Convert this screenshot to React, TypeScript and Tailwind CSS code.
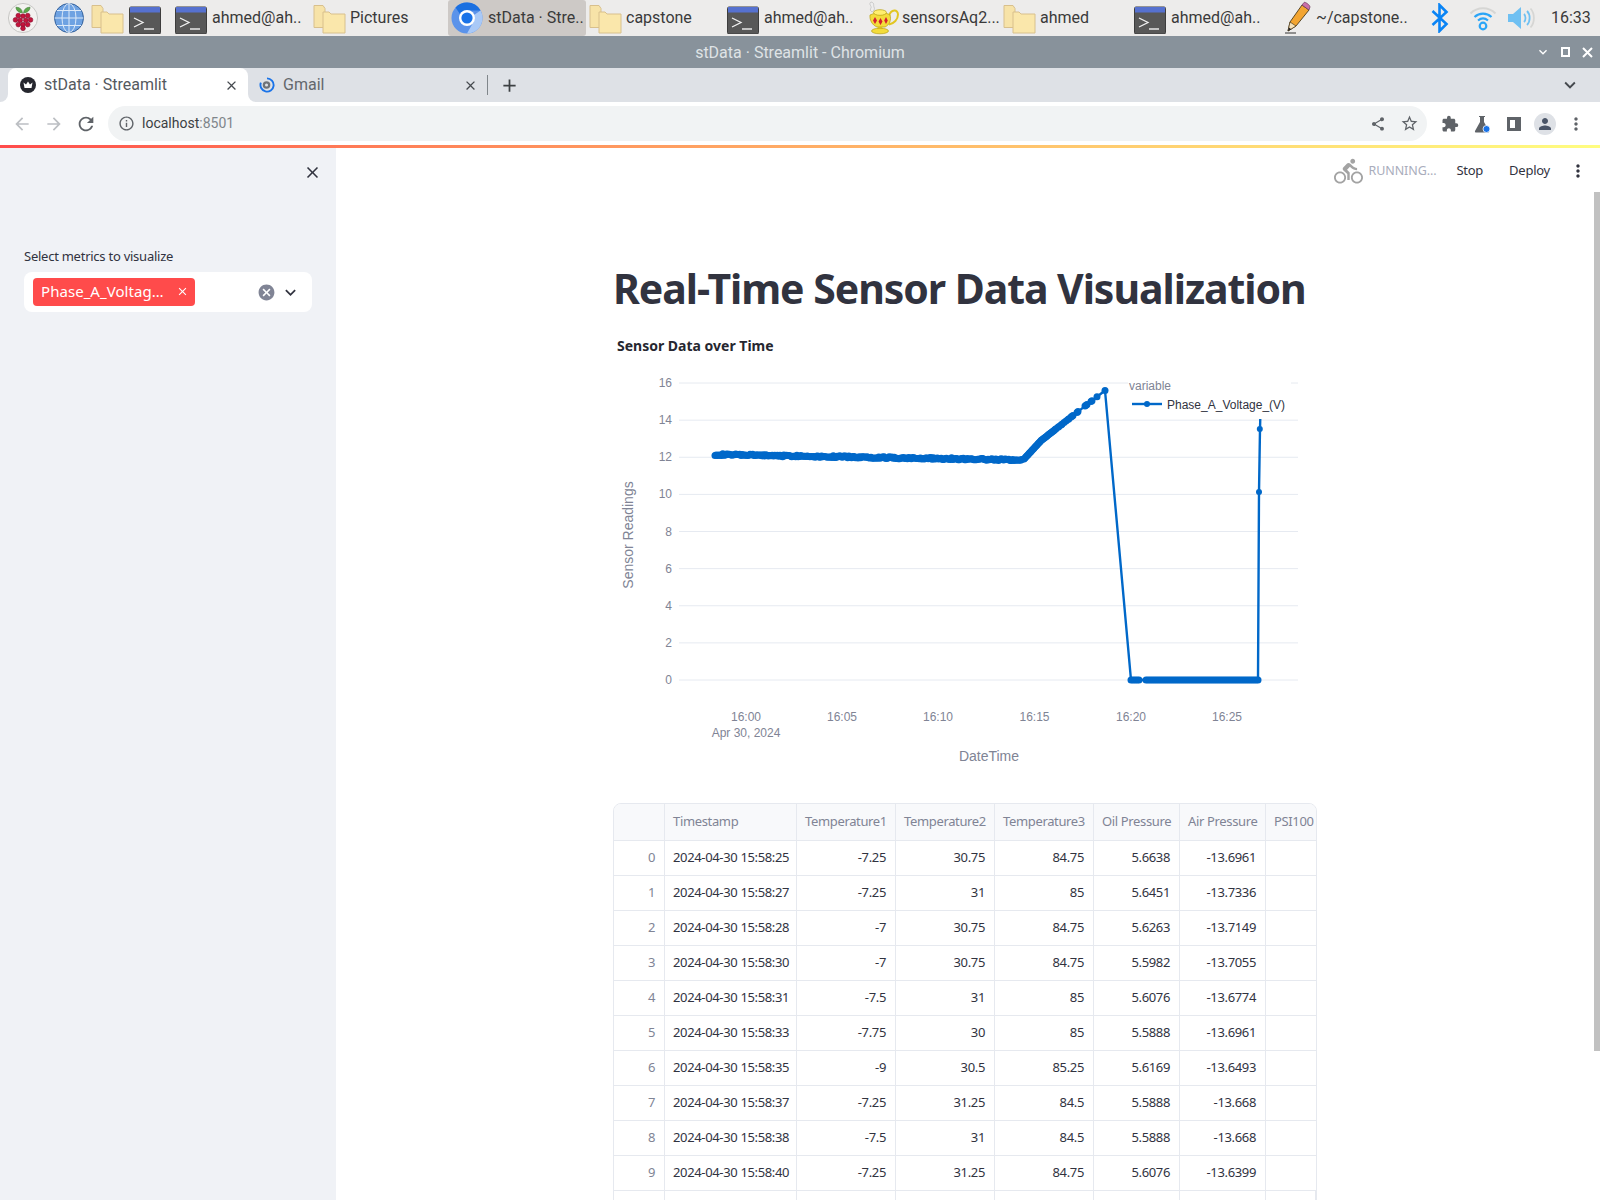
import React from "react";
import {
  MdArrowBack, MdArrowForward, MdRefresh, MdInfoOutline, MdShare, MdStarBorder, MdExtension,
  MdPerson, MdMoreVert, MdClose, MdExpandMore, MdDirectionsBike, MdCancel, MdAdd,
} from "react-icons/md";

const ROBOTO = "font-['Roboto',sans-serif]";
const ST = "font-['Noto_Sans',sans-serif]";

function Folder() {
  return (
    <svg width="33" height="32" viewBox="0 0 33 32" className="shrink-0">
      <path d="M1 3.500h9l2 3v19H1z" fill="#f7e3a8" stroke="#d8c08d" />
      <path d="M10 10h6l2 2h14v19H10z" fill="#fae7ab" stroke="#d8c08d" />
    </svg>
  );
}
function Terminal() {
  return (
    <svg width="32" height="32" viewBox="0 0 32 32" className="shrink-0">
      <rect x="0.5" y="5" width="31" height="27" rx="1.5" fill="#585858" stroke="#3d3d3d" />
      <rect x="1" y="5" width="30" height="5.5" fill="#5671cf" />
      <path d="M5 16l9 4.500-9 4.500" fill="none" stroke="#f2f2f2" strokeWidth="1.3" />
      <path d="M15 27h10" stroke="#f2f2f2" strokeWidth="1.4" />
    </svg>
  );
}
function Raspberry() {
  const berries = [[16, 16], [11, 15.5], [21, 15.5], [8, 20], [13, 20.5], [19, 20.5], [24, 20], [11, 25], [16, 25], [21, 25], [16, 29]];
  return (
    <svg width="32" height="32" viewBox="0 0 32 34" className="shrink-0">
      <circle cx="16" cy="17" r="15.5" fill="#f3f2f0" stroke="#c4c4c2" />
      <path d="M15.5 11.500C11 11.500 8.500 8.500 8.500 5.500c4 0 6.500 2 7 6zM16.500 11.500C21 11.500 23.500 8.500 23.500 5.500c-4 0-6.500 2-7 6z" fill="#5da84a" stroke="#2f6b2a" strokeWidth=".5" />
      {berries.map(([x, y], i) => <circle key={i} cx={x} cy={y - 1} r="2.500" fill="#c4153c" stroke="#7d0c2a" strokeWidth=".6" />)}
    </svg>
  );
}
function Globe() {
  return (
    <svg width="32" height="32" viewBox="0 0 32 32" className="shrink-0">
      <circle cx="16" cy="16" r="14.5" fill="#6ea2e2" stroke="#33609a" />
      <ellipse cx="16" cy="16" rx="7" ry="14.5" fill="none" stroke="#dce9f8" />
      <path d="M16 1.500v29M1.500 16h29M4 8.500h24M4 23.500h24" stroke="#dce9f8" fill="none" />
    </svg>
  );
}
function Chromium() {
  return (
    <svg width="32" height="32" viewBox="0 0 32 32" className="shrink-0">
      <circle cx="16" cy="16" r="15.5" fill="#5b93ea" />
      <path d="M16 .5A15.500 15.500 0 0 1 29.600 8.500H16A7.500 7.500 0 0 0 9 12L4.500 5.500A15.500 15.500 0 0 1 16 .5z" fill="#1a6fe0" />
      <path d="M29.600 8.500A15.500 15.500 0 0 1 16 31.500L22.500 20A7.500 7.500 0 0 0 23 13z" fill="#a9c9f7" />
      <circle cx="16" cy="16" r="8" fill="#fff" />
      <circle cx="16" cy="16" r="5.600" fill="#1a73e8" />
    </svg>
  );
}
function Lamp() {
  return (
    <svg width="33" height="34" viewBox="0 0 33 34" className="shrink-0">
      <path d="M5 1c-3 2 1 4 0 6-1 1-1 3 1 4 2-1 3-3 2-5C7 4 9 2 5 1z" fill="#eee" stroke="#bbb" strokeWidth=".7" />
      <path d="M23 15c2-7 9-7 9-1.500 0 5-4 9-9 10" fill="none" stroke="#e2c621" strokeWidth="2" />
      <path d="M4 14c6-3 16-3 20 0 1.500 5-.5 10-5 12h-8C6 24 3.500 19 4 14z" fill="#f3dc3b" stroke="#b89f10" strokeWidth=".7" />
      <ellipse cx="14" cy="11.500" rx="6.500" ry="2.800" fill="#ffef6e" stroke="#b89f10" strokeWidth=".7" />
      <path d="M12 26h4l1 2h-6z" fill="#e2c621" />
      <ellipse cx="14" cy="30" rx="8.500" ry="2.800" fill="#f3dc3b" stroke="#b89f10" strokeWidth=".7" />
      <path d="M9 16l2 3.500-2 3.500-2-3.500zM14.500 17l2 3.500-2 3.500-2-3.500zM20 16l1.800 3.500-1.800 3.500-1.800-3.500z" fill="#d3202f" />
    </svg>
  );
}
function Pencil() {
  return (
    <svg width="34" height="34" viewBox="0 0 34 34" className="shrink-0">
      <path d="M5 32h11" stroke="#333" strokeWidth="1" />
      <path d="M8 30l2-9L22 4l7 5L16 25z" fill="#f3a531" stroke="#4b3a1a" strokeWidth=".9" />
      <path d="M8 30l2-9 6 4z" fill="#f6e3bd" stroke="#4b3a1a" strokeWidth=".7" />
      <path d="M8 30l.8-3.500 2.600 1.800z" fill="#222" />
      <path d="M22 4l2-2.500c1-1 6 2.500 6 4.500L29 9z" fill="#c96fa8" stroke="#6d3a5c" strokeWidth=".7" />
    </svg>
  );
}
function Bluetooth() {
  return (
    <svg width="20" height="30" viewBox="0 0 20 30" className="shrink-0">
      <path d="M2.500 8l14 13-7 7V2l7 7-14 13" fill="none" stroke="#0a84f5" strokeWidth="2.600" />
    </svg>
  );
}
function Wifi() {
  return (
    <svg width="28" height="28" viewBox="0 0 28 28" className="shrink-0">
      <path d="M1.500 9.500c7-7 18-7 25 0" fill="none" stroke="#d6d6d4" strokeWidth="2" />
      <path d="M5.500 13c5-4.600 12-4.600 17 0" fill="none" stroke="#2ba5f7" strokeWidth="2.200" />
      <path d="M9 16.500c3-2.500 7-2.500 10 0" fill="none" stroke="#2ba5f7" strokeWidth="2.200" />
      <circle cx="14" cy="22" r="3.300" fill="none" stroke="#2ba5f7" strokeWidth="2.200" />
    </svg>
  );
}
function Volume() {
  return (
    <svg width="28" height="28" viewBox="0 0 28 28" className="shrink-0">
      <path d="M1 10h5l8-7v22l-8-7H1z" fill="#6fc0f2" />
      <path d="M17 10c2 2 2 6 0 8M20 7c3.500 3.500 3.500 10.500 0 14" fill="none" stroke="#6fc0f2" strokeWidth="1.800" />
      <path d="M23.500 4.500c4.500 5 4.500 14 0 19" fill="none" stroke="#d6d6d4" strokeWidth="1.800" />
    </svg>
  );
}
function TaskLabel({ children }: { children: React.ReactNode }) {
  return <span className="text-[16px] leading-none text-[#3a3a3a] whitespace-nowrap">{children}</span>;
}

function Taskbar() {
  return (
    <div className={`${ROBOTO} h-[36px] shrink-0 bg-[#edeceb] flex items-center pl-[7px]`}>
      <div className="w-[46px] flex items-center"><Raspberry /></div>
      <div className="w-[38px] flex items-center"><Globe /></div>
      <div className="w-[38px] flex items-center"><Folder /></div>
      <div className="w-[46px] flex items-center"><Terminal /></div>
      <div className="w-[138px] flex items-center gap-[5px]"><Terminal /><TaskLabel>ahmed@ah..</TaskLabel></div>
      <div className="w-[135px] flex items-center gap-[4px]"><Folder /><TaskLabel>Pictures</TaskLabel></div>
      <div className="w-[138px] mr-[3px] h-[36px] flex items-center gap-[5px] pl-[3px] bg-[#cdc9c6] rounded-[3px]"><Chromium /><TaskLabel>stData · Stre..</TaskLabel></div>
      <div className="w-[138px] flex items-center gap-[4px]"><Folder /><TaskLabel>capstone</TaskLabel></div>
      <div className="w-[139px] flex items-center gap-[5px]"><Terminal /><TaskLabel>ahmed@ah..</TaskLabel></div>
      <div className="w-[137px] flex items-center gap-[3px]"><Lamp /><TaskLabel>sensorsAq2...</TaskLabel></div>
      <div className="w-[131px] flex items-center gap-[4px]"><Folder /><TaskLabel>ahmed</TaskLabel></div>
      <div className="w-[146px] flex items-center gap-[5px]"><Terminal /><TaskLabel>ahmed@ah..</TaskLabel></div>
      <div className="w-[150px] flex items-center gap-[2px]"><Pencil /><TaskLabel>~/capstone..</TaskLabel></div>
      <div className="w-[39px] flex items-center"><Bluetooth /></div>
      <div className="w-[38px] flex items-center"><Wifi /></div>
      <div className="w-[44px] flex items-center"><Volume /></div>
      <span className="text-[16px] leading-none text-[#3a3a3a]">16:33</span>
    </div>
  );
}

function TitleBar() {
  return (
    <div className={`${ROBOTO} relative h-[32px] shrink-0 bg-[#88929b] flex items-center justify-center pt-[1px]`}>
      <span className="text-[16px] text-[#dfe3e6]">stData · Streamlit - Chromium</span>
      <div className="absolute right-[6px] top-0 h-full flex items-center gap-[9px] text-white">
        <MdExpandMore size={16} />
        <svg width="12" height="12" viewBox="0 0 12 12"><rect x="2" y="2" width="7" height="8" fill="none" stroke="#fff" strokeWidth="2" /></svg>
        <svg width="13" height="13" viewBox="0 0 13 13"><path d="M2 2l9 9M11 2l-9 9" stroke="#fff" strokeWidth="2" /></svg>
      </div>
    </div>
  );
}

function TabStrip() {
  return (
    <div className={`${ROBOTO} h-[34px] shrink-0 bg-[#dee1e6] flex items-end pl-[8px] pr-[19px]`}>
      <div className="relative w-[240px] h-[34px] bg-white rounded-t-[8px] flex items-center pl-[12px] pr-[9px] gap-[8px]">
        <div className="absolute left-[-8px] bottom-0 w-[8px] h-[8px] bg-white"><div className="w-full h-full bg-[#dee1e6] rounded-br-[8px]" /></div>
        <div className="absolute right-[-8px] bottom-0 w-[8px] h-[8px] bg-white"><div className="w-full h-full bg-[#dee1e6] rounded-bl-[8px]" /></div>
        <svg width="16" height="16" viewBox="0 0 16 16" className="shrink-0">
          <circle cx="8" cy="8" r="8" fill="#26272f" />
          <path d="M3.500 5.500l2.500 2L8 4.500l2 3 2.500-2-1 5.500h-7z" fill="#fff" />
        </svg>
        <span className="text-[16px] text-[#55595e] flex-1 whitespace-nowrap">stData · Streamlit</span>
        <MdClose size={15} className="text-[#45494e]" />
      </div>
      <div className="w-[239px] h-[34px] flex items-center pl-[11px] pr-[9px] gap-[7px]">
        <svg width="16" height="16" viewBox="0 0 17 17" className="shrink-0">
          <path d="M8.500 1.500a7 7 0 1 1-6.500 4.500" fill="none" stroke="#1a73e8" strokeWidth="2" />
          <circle cx="8" cy="8.500" r="4" fill="#6f7378" />
          <circle cx="8" cy="8.500" r="1.600" fill="#dee1e6" />
        </svg>
        <span className="text-[16px] text-[#63676c] flex-1 pl-[1px]">Gmail</span>
        <MdClose size={15} className="text-[#45494e]" />
      </div>
      <div className="w-px h-[20px] bg-[#80868b] mb-[7px]" />
      <div className="h-[34px] w-[43px] flex items-center justify-center text-[#3c4043]"><MdAdd size={21} /></div>
      <div className="flex-1" />
      <div className="h-[34px] flex items-center text-[#45494e]"><MdExpandMore size={22} /></div>
    </div>
  );
}

function Toolbar() {
  return (
    <div className={`${ROBOTO} h-[43px] shrink-0 bg-white flex items-center pl-[6px]`}>
      <MdArrowBack size={20} className="text-[#bcbfc3] w-[32px] shrink-0" />
      <MdArrowForward size={20} className="text-[#bcbfc3] w-[32px] shrink-0" />
      <MdRefresh size={22} className="text-[#5f6368] w-[32px] shrink-0" />
      <div className="ml-[6px] w-[1319px] h-[35px] rounded-full bg-[#f1f3f4] flex items-center pl-[10px] pr-[8px]">
        <MdInfoOutline size={17} className="text-[#5f6368] shrink-0" />
        <span className="ml-[7px] text-[14px] text-[#3c4043]">localhost<span className="text-[#80868b]">:8501</span></span>
        <div className="flex-1" />
        <MdShare size={16} className="text-[#5f6368] mr-[14px]" />
        <MdStarBorder size={19} className="text-[#5f6368]" />
      </div>
      <div className="flex items-center pl-[14px] text-[#5f6368]">
        <MdExtension size={18} className="w-[18px]" />
        <svg width="20" height="18" viewBox="0 0 20 18" className="ml-[13px]">
          <path d="M7 1h6v1h-1v5l5 9c.3.800-.2 1.500-1 1.500H4c-.8 0-1.300-.7-1-1.500l5-9V2H7z" fill="#5f6368" />
          <circle cx="14.500" cy="14" r="3.500" fill="#1a73e8" stroke="#fff" strokeWidth=".8" />
        </svg>
        <div className="ml-[15px] w-[14px] h-[14px] border-[3px] border-r-[6px] border-[#5f6368]" />
        <div className="ml-[13px] w-[22px] h-[22px] rounded-full bg-[#dee1e6] flex items-center justify-center"><MdPerson size={18} className="text-[#4a5568]" /></div>
        <MdMoreVert size={20} className="ml-[10px]" />
      </div>
    </div>
  );
}

function Sidebar() {
  return (
    <aside className={`${ST} w-[336px] shrink-0 bg-[#f0f2f6] pt-[17px] pl-[24px] pr-[24px]`}>
      <div className="flex justify-end h-[20px] items-center text-[#31333f]"><MdClose size={19} className="mr-[-10px]" /></div>
      <div className="mt-[64px] text-[13px] tracking-[-0.25px] leading-[20px] text-[#31333f]">Select metrics to visualize</div>
      <div className="mt-[6px] h-[40px] w-[288px] bg-white rounded-[8px] flex items-center pl-[9px] pr-[11px]">
        <div className="h-[28px] w-[162px] bg-[#ff4b4b] rounded-[4px] flex items-center pl-[8px] pr-[6px] pb-[1px] text-white">
          <span className="text-[15px] tracking-[0.05px] flex-1 whitespace-nowrap">Phase_A_Voltag…</span>
          <MdClose size={13} />
        </div>
        <div className="flex-1" />
        <MdCancel size={19} className="text-[#808495] mr-[4px]" />
        <MdExpandMore size={21} className="text-[#31333f]" />
      </div>
    </aside>
  );
}

const yOf = (v: number) => 680 - v * 18.56;
function buildData() {
  const pts: [number, number][] = [];
  const hash = (i: number) => {
    const s = Math.sin(i * 78.233) * 43758.5453;
    return s - Math.floor(s) - 0.5;
  };
  let i = 0;
  for (let x = 715; x <= 1023; x += 1.3) {
    const t = (x - 715) / 308;
    pts.push([x, yOf(12.15 - 0.3 * t + hash(i++) * 0.1)]);
  }
  const steps = [1024, 1025, 1026, 1027, 1028, 1029, 1030, 1031, 1032, 1033, 1034, 1035, 1036, 1037, 1038, 1039, 1040, 1041, 1042, 1043, 1044, 1045, 1046, 1047, 1048, 1049, 1050, 1051, 1052, 1053, 1054, 1055, 1056, 1058, 1059, 1061, 1062, 1064, 1066, 1068, 1069, 1071, 1072, 1073, 1077, 1078, 1085, 1086, 1087, 1091, 1092, 1097, 1105];
  steps.forEach((x) => {
    const v = x < 1041 ? 11.85 + ((x - 1023) / 18) * 1.05 : 12.9 + ((x - 1041) / 64) * 2.7;
    pts.push([x, yOf(v)]);
  });
  return pts;
}
const upper = buildData();
const zeros: number[] = [];
for (let x = 1131; x <= 1140; x += 2) zeros.push(x);
for (let x = 1146; x <= 1258; x += 2) zeros.push(x);
const linePath = "M" + upper.map((p) => `${p[0].toFixed(1)} ${p[1].toFixed(1)}`).join("L") + "L1131 680L1258 680L1259 492L1260 429L1260.500 410";

function Chart() {
  const ticksY = [0, 2, 4, 6, 8, 10, 12, 14, 16];
  const ticksX: [number, string][] = [[746, "16:00"], [842, "16:05"], [938, "16:10"], [1034.500, "16:15"], [1131, "16:20"], [1227, "16:25"]];
  const tick = "#808495";
  return (
    <svg width="703" height="430" viewBox="613 365 703 430" className="block" fontFamily="'Liberation Sans', sans-serif">
      {ticksY.map((v) => (
        <g key={v}>
          <path d={`M679 ${yOf(v)}H1298`} stroke="#e6eaf1" strokeWidth="1" />
          <text x="672" y={yOf(v) + 4} textAnchor="end" fontSize="12" fill={tick}>{v}</text>
        </g>
      ))}
      {ticksX.map(([x, l]) => (
        <text key={l} x={x} y="721" textAnchor="middle" fontSize="12" fill={tick}>{l}</text>
      ))}
      <text x="746" y="737" textAnchor="middle" fontSize="12" fill={tick}>Apr 30, 2024</text>
      <text x="989" y="761" textAnchor="middle" fontSize="14" fill={tick}>DateTime</text>
      <text transform="translate(633 535) rotate(-90)" textAnchor="middle" fontSize="14" fill={tick}>Sensor Readings</text>
      <path d={linePath} fill="none" stroke="#0068c9" strokeWidth="2.400" strokeLinejoin="round" />
      {upper.map((p, i) => <circle key={i} cx={p[0]} cy={p[1]} r="3.500" fill="#0068c9" />)}
      {zeros.map((x) => <circle key={x} cx={x} cy="680" r="3.500" fill="#0068c9" />)}
      <circle cx="1259" cy="492" r="3" fill="#0068c9" />
      <circle cx="1259.800" cy="429" r="3" fill="#0068c9" />
      <rect x="1128" y="375" width="163" height="44" fill="#fff" />
      <text x="1129" y="390" fontSize="12" fill={tick}>variable</text>
      <path d="M1132 404H1162" stroke="#0068c9" strokeWidth="2.400" />
      <circle cx="1147" cy="404" r="3" fill="#0068c9" />
      <text x="1167" y="409" fontSize="12" fill="#31333f">Phase_A_Voltage_(V)</text>
    </svg>
  );
}

const rows = [
  ["2024-04-30 15:58:25", "-7.25", "30.75", "84.75", "5.6638", "-13.6961"],
  ["2024-04-30 15:58:27", "-7.25", "31", "85", "5.6451", "-13.7336"],
  ["2024-04-30 15:58:28", "-7", "30.75", "84.75", "5.6263", "-13.7149"],
  ["2024-04-30 15:58:30", "-7", "30.75", "84.75", "5.5982", "-13.7055"],
  ["2024-04-30 15:58:31", "-7.5", "31", "85", "5.6076", "-13.6774"],
  ["2024-04-30 15:58:33", "-7.75", "30", "85", "5.5888", "-13.6961"],
  ["2024-04-30 15:58:35", "-9", "30.5", "85.25", "5.6169", "-13.6493"],
  ["2024-04-30 15:58:37", "-7.25", "31.25", "84.5", "5.5888", "-13.668"],
  ["2024-04-30 15:58:38", "-7.5", "31", "84.5", "5.5888", "-13.668"],
  ["2024-04-30 15:58:40", "-7.25", "31.25", "84.75", "5.6076", "-13.6399"],
];
const GRID = "grid grid-cols-[51px_132px_99px_99px_99px_86px_86px_50px]";
const HEAD = "h-[36px] flex items-center pl-[8px] pr-[8px] border-r border-[#e6e9ef] bg-[#f8f9fb] text-[#808495] whitespace-nowrap overflow-hidden";
const CELL = "h-[35px] flex items-center justify-end pl-[8px] pr-[9px] border-r border-t border-[#e6e9ef] text-[#31333f] whitespace-nowrap";

function DataTable() {
  return (
    <div className="w-[704px] h-[420px] border border-[#e6e9ef] rounded-[8px] overflow-hidden text-[13px] tracking-[-0.35px]">
      <div className={GRID}>
        <div className={HEAD} />
        <div className={HEAD}>Timestamp</div>
        <div className={HEAD}>Temperature1</div>
        <div className={HEAD}>Temperature2</div>
        <div className={HEAD}>Temperature3</div>
        <div className={HEAD}>Oil Pressure</div>
        <div className={HEAD}>Air Pressure</div>
        <div className={`${HEAD} border-r-0`}>PSI100</div>
      </div>
      {rows.map((r, i) => (
        <div key={i} className={GRID}>
          <div className={`${CELL} text-[#808495]`}>{i}</div>
          <div className={`${CELL} justify-start`}>{r[0]}</div>
          {r.slice(1).map((c, j) => <div key={j} className={CELL}>{c}</div>)}
          <div className={`${CELL} border-r-0`} />
        </div>
      ))}
      <div className={GRID}>
        {[0, 1, 2, 3, 4, 5, 6, 7].map((i) => <div key={i} className={CELL} />)}
      </div>
    </div>
  );
}

function Main() {
  return (
    <main className={`${ST} relative flex-1 min-w-0 bg-white overflow-hidden`}>
      <div className="h-[52px] flex items-center justify-end pr-[12px] text-[#31333f]">
        <MdDirectionsBike size={29} className="text-[#a3a3a3]" />
        <span className="ml-[6px] text-[12.500px] tracking-[-0.1px] text-[#a9adbc]">RUNNING...</span>
        <span className="ml-[20px] text-[13px] tracking-[-0.25px]">Stop</span>
        <span className="ml-[26px] text-[13px] tracking-[-0.25px]">Deploy</span>
        <MdMoreVert size={20} className="ml-[18px]" />
      </div>
      <div className="ml-[277px] w-[704px]">
        <h1 className="mt-[64px] h-[55px] flex items-center text-[41px] leading-[55px] font-bold tracking-[-1.05px] text-[#31333f] whitespace-nowrap">Real-Time Sensor Data Visualization</h1>
        <div className="mt-[19px] pl-[4px] h-[20px] flex items-center text-[14px] font-bold text-[#262730]">Sensor Data over Time</div>
        <div className="mt-[10px]"><Chart /></div>
        <div className="mt-[8px]"><DataTable /></div>
      </div>
      <div className="absolute right-0 top-[47px] w-[6px] h-[859px] bg-[#c1c1c1]" />
    </main>
  );
}

export default function App() {
  return (
    <div className="w-[1600px] h-[1200px] overflow-hidden flex flex-col bg-white">
      <Taskbar />
      <TitleBar />
      <TabStrip />
      <Toolbar />
      <div className="relative flex flex-1 min-h-0">
        <div className="absolute left-0 right-0 top-0 h-[3px] z-10 bg-gradient-to-r from-[#ff4b4b] to-[#fffd80]" />
        <Sidebar />
        <Main />
      </div>
    </div>
  );
}
